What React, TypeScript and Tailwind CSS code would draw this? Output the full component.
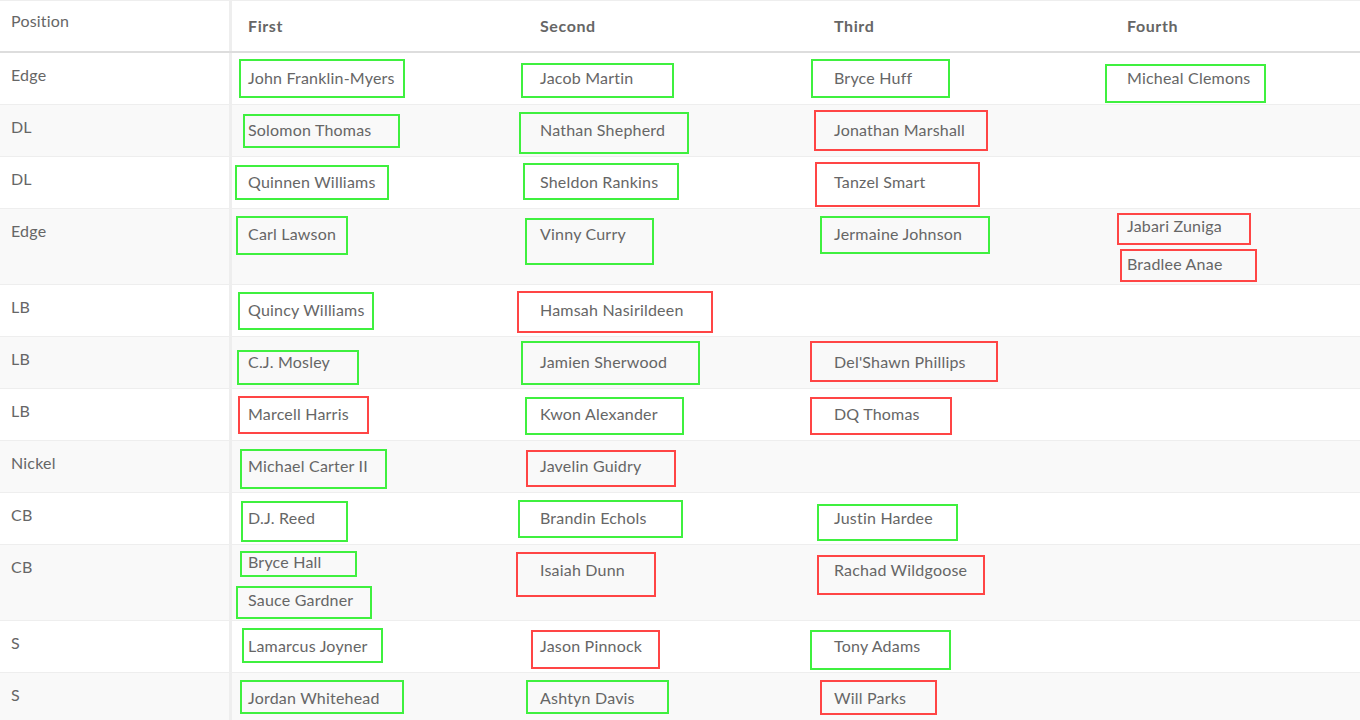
type Player = { name: string; ok: boolean; box: string };
type Row = { pos: string; tall?: boolean; cells: Player[][] };

const rows: Row[] = [
  {
    pos: 'Edge',
    cells: [
      [{ name: 'John Franklin-Myers', ok: true, box: 'left-[-9px] top-[-10px] w-[166px] h-[39px]' }],
      [{ name: 'Jacob Martin', ok: true, box: 'left-[-19px] top-[-6px] w-[153px] h-[35px]' }],
      [{ name: 'Bryce Huff', ok: true, box: 'left-[-23px] top-[-10px] w-[139px] h-[39px]' }],
      [{ name: 'Micheal Clemons', ok: true, box: 'left-[-22px] top-[-5px] w-[161px] h-[39px]' }],
    ],
  },
  {
    pos: 'DL',
    cells: [
      [{ name: 'Solomon Thomas', ok: true, box: 'left-[-5px] top-[-7px] w-[157px] h-[34px]' }],
      [{ name: 'Nathan Shepherd', ok: true, box: 'left-[-21px] top-[-9px] w-[170px] h-[42px]' }],
      [{ name: 'Jonathan Marshall', ok: false, box: 'left-[-20px] top-[-11px] w-[174px] h-[41px]' }],
      [],
    ],
  },
  {
    pos: 'DL',
    cells: [
      [{ name: 'Quinnen Williams', ok: true, box: 'left-[-13px] top-[-8px] w-[154px] h-[35px]' }],
      [{ name: 'Sheldon Rankins', ok: true, box: 'left-[-17px] top-[-10px] w-[156px] h-[37px]' }],
      [{ name: 'Tanzel Smart', ok: false, box: 'left-[-19px] top-[-11px] w-[165px] h-[45px]' }],
      [],
    ],
  },
  {
    pos: 'Edge',
    tall: true,
    cells: [
      [{ name: 'Carl Lawson', ok: true, box: 'left-[-12px] top-[-9px] w-[112px] h-[39px]' }],
      [{ name: 'Vinny Curry', ok: true, box: 'left-[-15px] top-[-7px] w-[129px] h-[47px]' }],
      [{ name: 'Jermaine Johnson', ok: true, box: 'left-[-14px] top-[-9px] w-[170px] h-[38px]' }],
      [
        { name: 'Jabari Zuniga', ok: false, box: 'left-[-10px] top-[-4px] w-[134px] h-[32px]' },
        { name: 'Bradlee Anae', ok: false, box: 'left-[-7px] top-[-6px] w-[137px] h-[33px]' },
      ],
    ],
  },
  {
    pos: 'LB',
    cells: [
      [{ name: 'Quincy Williams', ok: true, box: 'left-[-10px] top-[-9px] w-[136px] h-[38px]' }],
      [{ name: 'Hamsah Nasirildeen', ok: false, box: 'left-[-23px] top-[-10px] w-[196px] h-[42px]' }],
      [],
      [],
    ],
  },
  {
    pos: 'LB',
    cells: [
      [{ name: 'C.J. Mosley', ok: true, box: 'left-[-11px] top-[-3px] w-[122px] h-[35px]' }],
      [{ name: 'Jamien Sherwood', ok: true, box: 'left-[-19px] top-[-12px] w-[179px] h-[44px]' }],
      [{ name: "Del'Shawn Phillips", ok: false, box: 'left-[-24px] top-[-12px] w-[188px] h-[41px]' }],
      [],
    ],
  },
  {
    pos: 'LB',
    cells: [
      [{ name: 'Marcell Harris', ok: false, box: 'left-[-10px] top-[-9px] w-[131px] h-[38px]' }],
      [{ name: 'Kwon Alexander', ok: true, box: 'left-[-15px] top-[-8px] w-[159px] h-[38px]' }],
      [{ name: 'DQ Thomas', ok: false, box: 'left-[-24px] top-[-8px] w-[142px] h-[38px]' }],
      [],
    ],
  },
  {
    pos: 'Nickel',
    cells: [
      [{ name: 'Michael Carter II', ok: true, box: 'left-[-8px] top-[-8px] w-[147px] h-[40px]' }],
      [{ name: 'Javelin Guidry', ok: false, box: 'left-[-14px] top-[-7px] w-[150px] h-[37px]' }],
      [],
      [],
    ],
  },
  {
    pos: 'CB',
    cells: [
      [{ name: 'D.J. Reed', ok: true, box: 'left-[-7px] top-[-8px] w-[107px] h-[41px]' }],
      [{ name: 'Brandin Echols', ok: true, box: 'left-[-22px] top-[-9px] w-[165px] h-[38px]' }],
      [{ name: 'Justin Hardee', ok: true, box: 'left-[-17px] top-[-5px] w-[141px] h-[37px]' }],
      [],
    ],
  },
  {
    pos: 'CB',
    tall: true,
    cells: [
      [
        { name: 'Bryce Hall', ok: true, box: 'left-[-8px] top-[-2px] w-[117px] h-[26px]' },
        { name: 'Sauce Gardner', ok: true, box: 'left-[-12px] top-[-5px] w-[136px] h-[33px]' },
      ],
      [{ name: 'Isaiah Dunn', ok: false, box: 'left-[-24px] top-[-9px] w-[140px] h-[45px]' }],
      [{ name: 'Rachad Wildgoose', ok: false, box: 'left-[-17px] top-[-6px] w-[168px] h-[40px]' }],
      [],
    ],
  },
  {
    pos: 'S',
    cells: [
      [{ name: 'Lamarcus Joyner', ok: true, box: 'left-[-6px] top-[-9px] w-[141px] h-[35px]' }],
      [{ name: 'Jason Pinnock', ok: false, box: 'left-[-9px] top-[-7px] w-[129px] h-[39px]' }],
      [{ name: 'Tony Adams', ok: true, box: 'left-[-24px] top-[-7px] w-[141px] h-[40px]' }],
      [],
    ],
  },
  {
    pos: 'S',
    cells: [
      [{ name: 'Jordan Whitehead', ok: true, box: 'left-[-8px] top-[-9px] w-[164px] h-[34px]' }],
      [{ name: 'Ashtyn Davis', ok: true, box: 'left-[-14px] top-[-9px] w-[143px] h-[34px]' }],
      [{ name: 'Will Parks', ok: false, box: 'left-[-14px] top-[-9px] w-[117px] h-[35px]' }],
      [],
    ],
  },
];

const headers = ['First', 'Second', 'Third', 'Fourth'];
const gridCols = 'grid grid-cols-[232px_292px_294px_293px_1fr]';

function Name({ p }: { p: Player }) {
  return (
    <div className="relative h-5 leading-5 whitespace-nowrap">
      <span
        className={`pointer-events-none absolute border-2 ${p.box} ${
          p.ok ? 'border-[#3ff03f]' : 'border-[#ff4545]'
        }`}
      />
      <span className="relative top-[-1px]">{p.name}</span>
    </div>
  );
}

export default function App() {
  return (
    <div
      className="min-h-screen w-full overflow-hidden bg-white text-[16px] tracking-[0.2px] text-[#666]"
      style={{ fontFamily: 'Lato, "Open Sans", sans-serif' }}
    >
      <div className={`${gridCols} h-[53px] border-t border-b-2 border-t-[#eee] border-b-[#ddd]`}>
        <div className="border-r-[3px] border-[#eee] pt-[10px] pl-[11px] leading-5">Position</div>
        {headers.map((h) => (
          <div key={h} className="pt-[15px] pl-4 leading-5 font-bold tracking-[0.6px]">
            {h}
          </div>
        ))}
      </div>

      {rows.map((row, i) => (
        <div
          key={i}
          className={`${gridCols} border-b border-[#eee] ${row.tall ? 'h-[76px]' : 'h-[52px]'} ${
            i % 2 === 1 ? 'bg-[#f9f9f9]' : 'bg-white'
          }`}
        >
          <div className="border-r-[3px] border-[#eee] pt-3 pl-[11px] leading-5">{row.pos}</div>
          {row.cells.map((cell, j) => (
            <div
              key={j}
              className={`flex flex-col pl-4 ${cell.length > 1 ? 'gap-[18px] pt-2' : 'pt-4'}`}
            >
              {cell.map((p) => (
                <Name key={p.name} p={p} />
              ))}
            </div>
          ))}
        </div>
      ))}
    </div>
  );
}
